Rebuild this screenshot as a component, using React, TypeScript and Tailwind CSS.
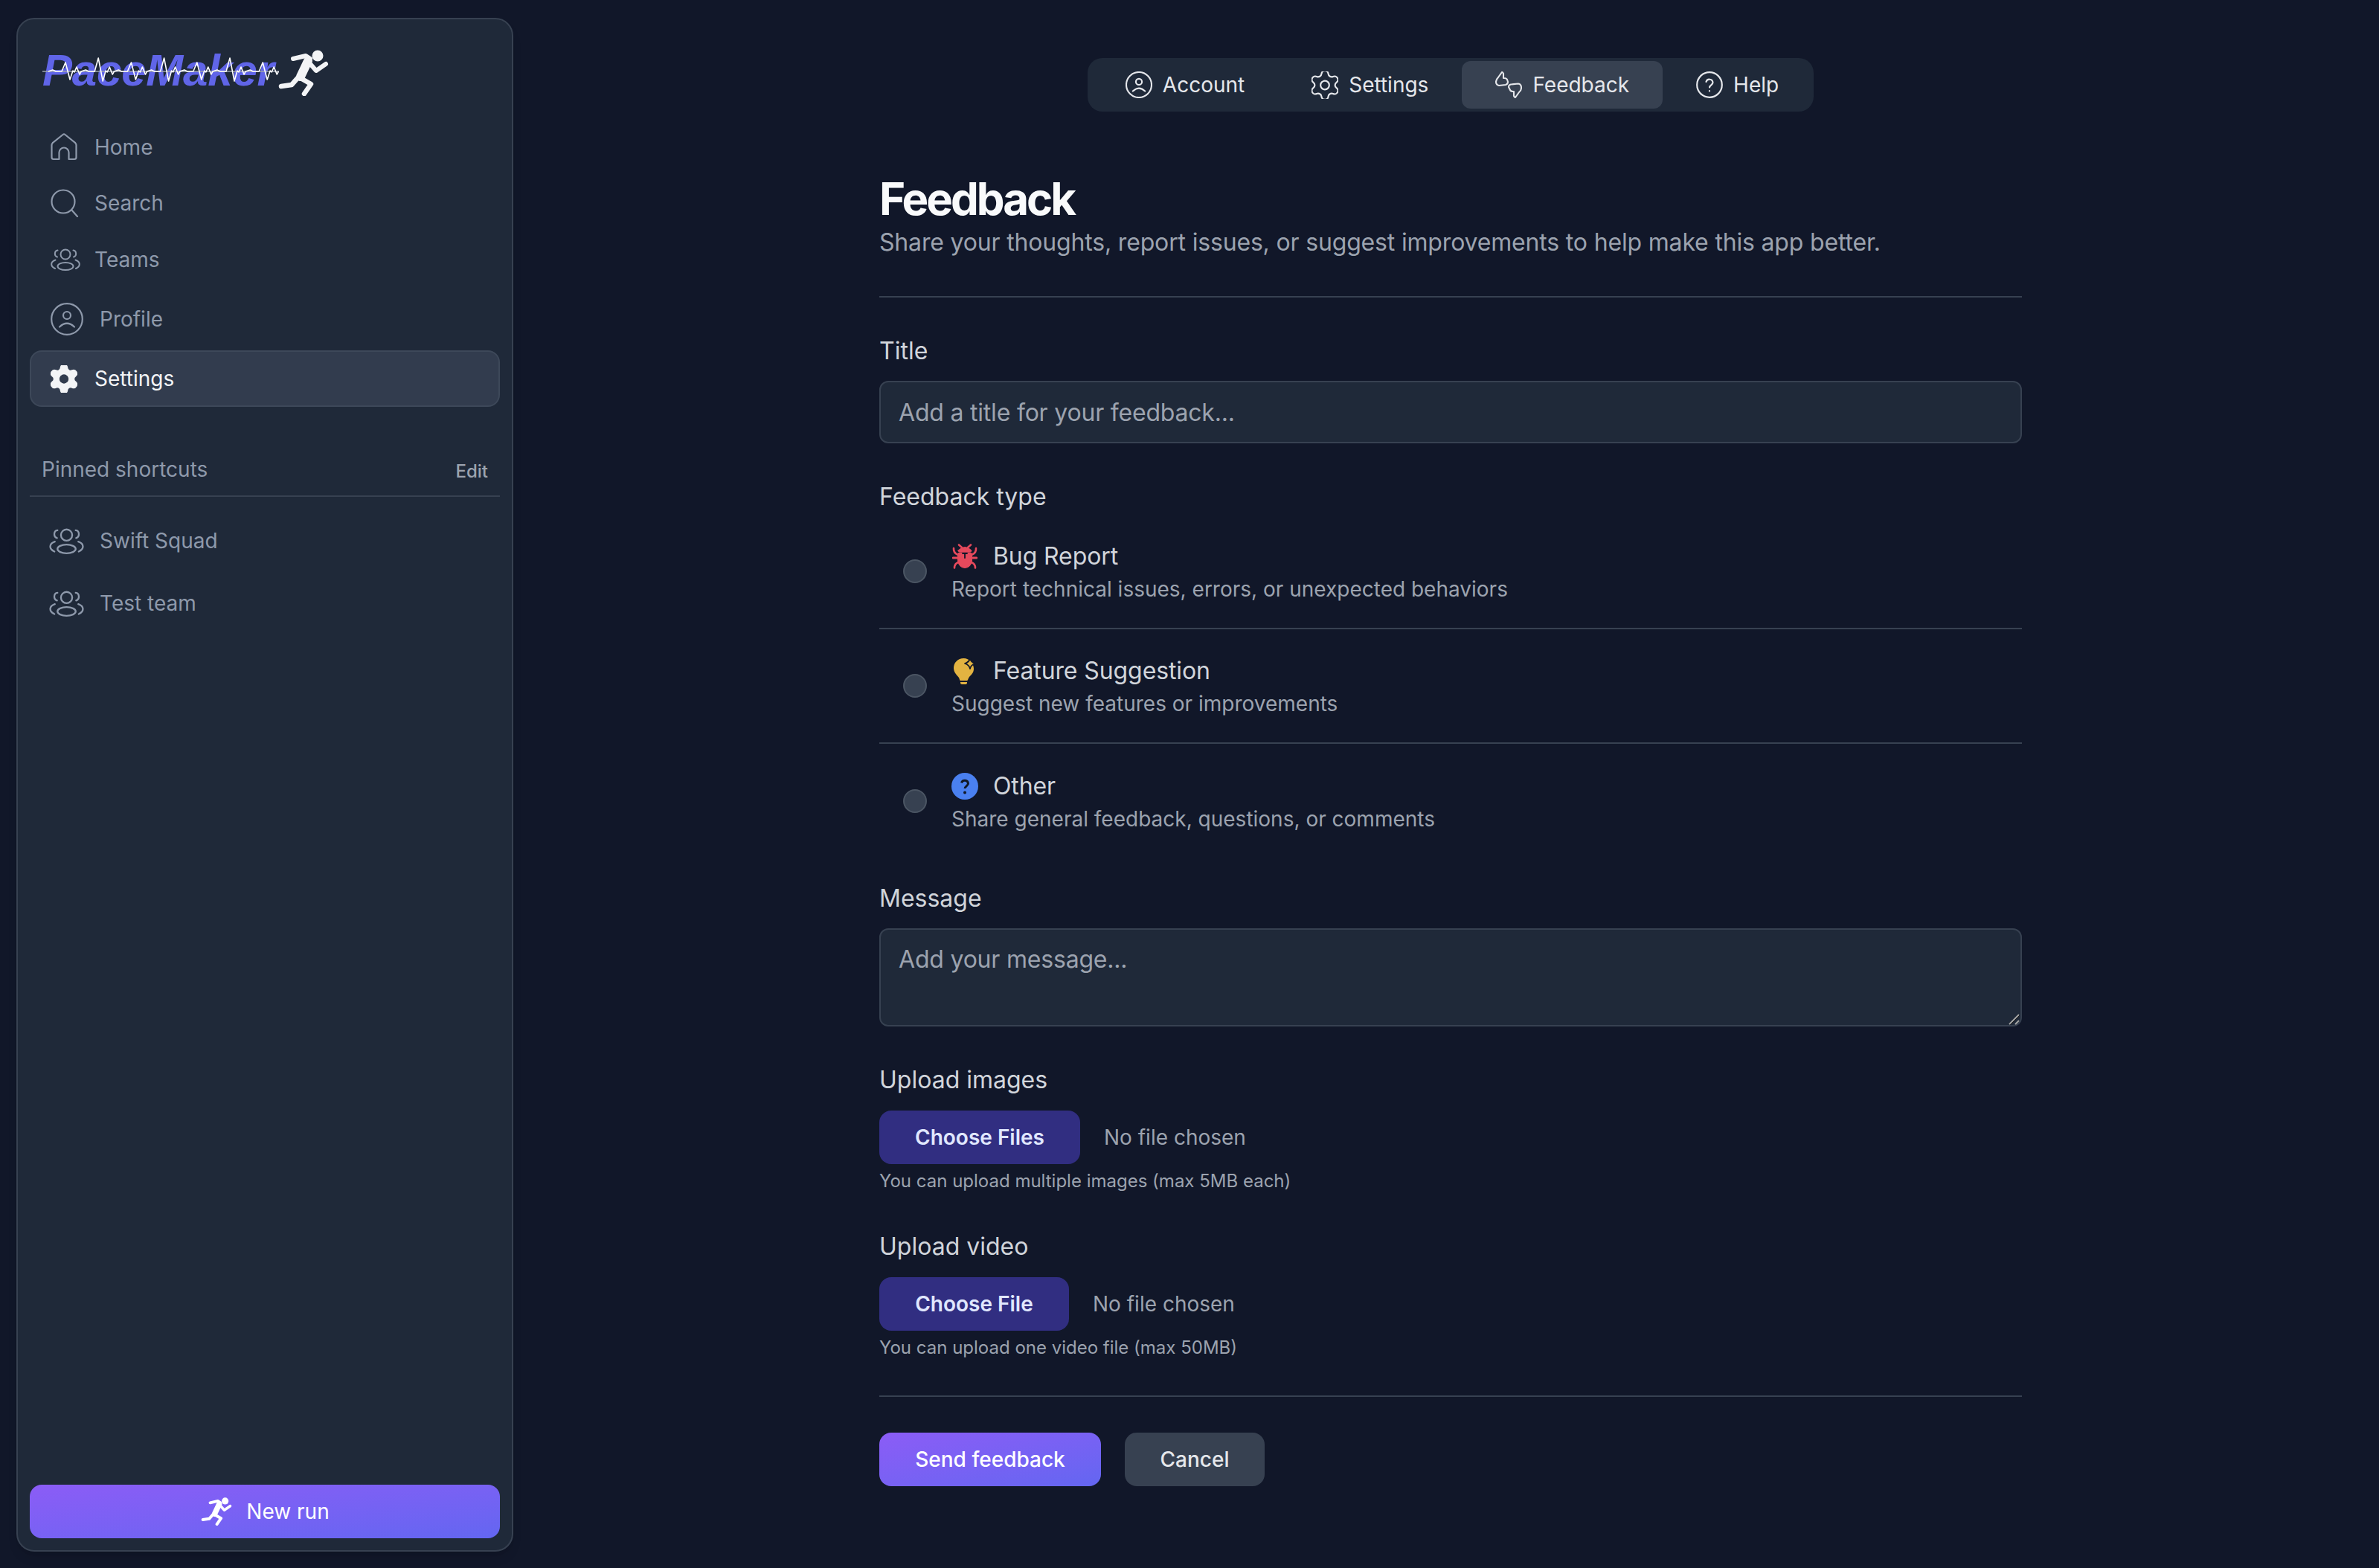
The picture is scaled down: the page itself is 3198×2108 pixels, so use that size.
import React from "react";

const gearPath =
  "M9.671 4.136a2.34 2.34 0 0 1 4.659 0 2.34 2.34 0 0 0 3.319 1.915 2.34 2.34 0 0 1 2.33 4.033 2.34 2.34 0 0 0 0 3.831 2.34 2.34 0 0 1-2.33 4.033 2.34 2.34 0 0 0-3.319 1.915 2.34 2.34 0 0 1-4.659 0 2.34 2.34 0 0 0-3.32-1.915 2.34 2.34 0 0 1-2.33-4.033 2.34 2.34 0 0 0 0-3.831A2.34 2.34 0 0 1 6.35 6.051a2.34 2.34 0 0 0 3.32-1.915";

function Runner({ className }: { className: string }) {
  return (
    <svg viewBox="0 0 70 62" className={className} fill="none" stroke="currentColor" strokeLinecap="round" strokeLinejoin="round">
      <circle cx="54" cy="8" r="7.5" fill="currentColor" stroke="none" />
      <path d="M21 12 L38 8 L44 12" strokeWidth="6" />
      <path d="M41 15 L31 36" strokeWidth="12" />
      <path d="M45 20 L52 28 L65 19" strokeWidth="6" />
      <path d="M27 38 L19 47 L5 49" strokeWidth="6.5" />
      <path d="M31 38 L45 46 L36 59" strokeWidth="6.5" />
    </svg>
  );
}

function Ecg() {
  const pts: string[] = [];
  for (let i = 0; i < 7; i++) {
    const x = 8 + i * 44.2;
    const tall = i % 2 === 1;
    const up = tall ? 2 : 8;
    const down = tall ? 33 : 31;
    pts.push(`${x},20 ${x + 6},18 ${x + 10},20 ${x + 18},20 ${x + 23},${up} ${x + 29},${down} ${x + 33},19 ${x + 35},21 ${x + 38},14 ${x + 42},24 ${x + 44.2},20`);
  }
  return (
    <svg viewBox="0 0 320 40" className="absolute left-0 top-[16px] h-[40px] w-[320px]" fill="none">
      <path d="M0 20H318" stroke="#9ca3af" strokeWidth="1.5" />
      <polyline points={pts.join(" ")} stroke="#ffffff" strokeWidth="1.6" strokeLinejoin="round" />
    </svg>
  );
}

function HomeIcon() {
  return (
    <svg viewBox="0 0 36 37" className="h-[37px] w-[36px]" fill="none" stroke="currentColor" strokeWidth="2.2" strokeLinejoin="round">
      <path d="M4 35h7.5v-9a6.5 6.5 0 0 1 13 0v9H32a2.5 2.5 0 0 0 2.5-2.5V16a4 4 0 0 0-1.2-2.8L19.5 2a2.2 2.2 0 0 0-3 0L2.7 13.2A4 4 0 0 0 1.5 16v16.5A2.5 2.5 0 0 0 4 35z" />
    </svg>
  );
}

function SearchIcon() {
  return (
    <svg viewBox="0 0 38 38" className="h-[38px] w-[38px]" fill="none" stroke="currentColor" strokeWidth="2.2" strokeLinecap="round">
      <circle cx="17" cy="17" r="15.5" />
      <path d="M28.5 28.5 L36 37" />
    </svg>
  );
}

function TeamIcon({ className }: { className: string }) {
  return (
    <svg viewBox="0 0 40 30" className={className} fill="none" stroke="currentColor" strokeWidth="2" strokeLinecap="round">
      <circle cx="20" cy="8" r="6.5" />
      <ellipse cx="20" cy="24" rx="10.5" ry="5" />
      <path d="M9.5 2.5C5 3 4.5 10 9 11.5" />
      <path d="M30.5 2.5C35 3 35.5 10 31 11.5" />
      <path d="M6.5 15.5C-0.5 18 -0.5 24 6 27" />
      <path d="M33.5 15.5C40.5 18 40.5 24 34 27" />
    </svg>
  );
}

function ProfileIcon({ className, sw = 2.2 }: { className: string; sw?: number }) {
  return (
    <svg viewBox="0 0 44 44" className={className} fill="none" stroke="currentColor" strokeWidth={sw} strokeLinecap="round">
      <circle cx="22" cy="22" r="20.8" />
      <circle cx="22" cy="17" r="5" />
      <path d="M12 32.5Q22 23 32 32.5" />
    </svg>
  );
}

function GearOutline() {
  return (
    <svg viewBox="3 2.5 18 19" className="h-[37px] w-[36px]" fill="none" stroke="currentColor" strokeWidth="1.1" strokeLinejoin="round">
      <path d={gearPath} />
      <circle cx="12" cy="12" r="3" />
    </svg>
  );
}

function GearSolid() {
  return (
    <svg viewBox="3.6 2.4 16.8 19.2" className="h-[37px] w-[36px]" fill="#f3f4f6" stroke="#f3f4f6" strokeWidth="0.8" strokeLinejoin="round">
      <path d={gearPath} />
      <circle cx="12" cy="12" r="3.2" fill="#323c4e" stroke="none" />
    </svg>
  );
}

function FeedbackIcon() {
  return (
    <svg viewBox="0 0 36 36" className="h-[36px] w-[36px]" fill="none" stroke="currentColor" strokeWidth="2.1" strokeLinejoin="round">
      <path d="M9 1L4 8Q1 11 1 14Q1 18 5 19L14 18Q17 17 17 14L16 11Q15 9 12 9L11 9L11 3Q10 1 9 1Z" />
      <path d="M27 35L32 28Q35 26 35 22Q35 17 31 16.5L21 17.5Q18 18 18 21L20 25Q21 27 24 27L25 27L25 33Q26 35 27 35Z" />
    </svg>
  );
}

function HelpIcon() {
  return (
    <svg viewBox="0 0 36 36" className="h-[36px] w-[36px]" fill="none" stroke="currentColor" strokeWidth="2.2" strokeLinecap="round">
      <circle cx="18" cy="18" r="16.8" />
      <path d="M13.5 14a4.6 4.6 0 0 1 9 1c0 3-4.4 3.6-4.4 6.4" />
      <path d="M18 26.2v.2" />
    </svg>
  );
}

function BugIcon() {
  return (
    <svg viewBox="0 0 34 34" className="h-[34px] w-[34px]" fill="#e5495c" stroke="#e5495c" strokeLinecap="round" strokeLinejoin="round">
      <path d="M9 1.5L13 5M25 1.5L21 5" strokeWidth="2.6" fill="none" />
      <path d="M8 9Q17 0 26 9Q26 11 24 11H10Q8 11 8 9Z" strokeWidth="1" />
      <path d="M7.5 14Q7.5 12 10 12H24Q26.5 12 26.5 14V23Q25 32 17 32.5Q9 32 7.5 23Z" strokeWidth="1" />
      <path d="M2 6Q1.5 12 7 14.5M32 6Q32.5 12 27 14.5" strokeWidth="2.6" fill="none" />
      <path d="M1.2 19H7M32.8 19H27" strokeWidth="3" fill="none" />
      <path d="M3 32.5Q3 27 8 25M31 32.5Q31 27 26 25" strokeWidth="2.6" fill="none" />
      <path d="M14 13H20M17 13V19" stroke="#111729" strokeWidth="1.8" fill="none" />
    </svg>
  );
}

function BulbIcon() {
  return (
    <svg viewBox="0 0 30 36" className="h-[36px] w-[30px]" fill="#e3b341">
      <path d="M13.5 1C5.5 1 0 7 0 14C0 20 4 23 7 27C8 29 8 31 9 31H18C19 31 19 29 21 26C24 23 27 20 27 15C27 8 21 1 13.5 1Z" />
      <path d="M9 33H18V34Q18 36 16 36H11Q9 36 9 34Z" />
      <path d="M22 1Q23 6 29 8Q23 10 22 15Q21 10 15 8Q21 6 22 1Z" stroke="#111729" strokeWidth="1.8" strokeLinejoin="round" />
    </svg>
  );
}

function QuestionIcon() {
  return (
    <svg viewBox="0 0 36 36" className="h-[36px] w-[36px]">
      <circle cx="18" cy="18" r="18" fill="#4a80f0" />
      <path d="M13.5 13.5a4.6 4.6 0 0 1 9 .8c0 3-4.4 3.6-4.4 6.8" fill="none" stroke="#111827" strokeWidth="3" />
      <circle cx="18" cy="26.5" r="2" fill="#111827" />
    </svg>
  );
}

function NavRow({ h, icon, label, w, active }: { h: string; icon: React.ReactNode; label: string; w: string; active?: boolean }) {
  return (
    <a className={`flex items-center text-[28px] ${h} ${active ? "rounded-[16px] border-2 border-[#3d4859] bg-[#323c4e] pl-[26px] text-[#f3f4f6]" : "pl-[28px] text-[#8e99ab]"}`}>
      <span className={`flex shrink-0 items-center justify-start ${w}`}>{icon}</span>
      <span>{label}</span>
    </a>
  );
}

function Tab({ icon, label, active }: { icon: React.ReactNode; label: string; active?: boolean }) {
  return (
    <a className={`flex h-[64px] items-center gap-[14px] rounded-[12px] px-[45px] text-[28px] text-[#e5e7eb] ${active ? "bg-[#374151]" : ""}`}>
      {icon}
      <span>{label}</span>
    </a>
  );
}

function FeedbackOption({ icon, name, desc, border }: { icon: React.ReactNode; name: string; desc: string; border?: boolean }) {
  return (
    <label className={`flex h-[154px] items-center gap-[33px] px-[32px] ${border ? "border-b-2 border-[#374151]" : ""}`}>
      <span className="h-[32px] w-[32px] shrink-0 rounded-full border-2 border-[#4b5563] bg-[#374151]" />
      <span className="flex flex-col pt-[3px]">
        <span className="flex h-[44px] items-center text-[32px] tracking-[-0.1px] text-[#d1d5db]">
          <span className="mr-[20px] flex w-[36px] items-center justify-center">{icon}</span>
          {name}
        </span>
        <span className="h-[44px] text-[28px] leading-[44px] text-[#9ca3af]">{desc}</span>
      </span>
    </label>
  );
}

function FieldLabel({ children, className }: { children: React.ReactNode; className: string }) {
  return <div className={`text-[32px] leading-[40px] text-[#d1d5db] ${className}`}>{children}</div>;
}

function Upload({ title, button, width, hint }: { title: string; button: string; width: string; hint: string }) {
  return (
    <div>
      <FieldLabel className="mt-[52px]">{title}</FieldLabel>
      <div className="mt-[21px] flex items-center">
        <button className={`h-[72px] ${width} rounded-[16px] bg-[#312e81] text-[28px] font-semibold text-[#e0e7ff]`}>{button}</button>
        <span className="ml-[32px] text-[28px] text-[#9ca3af]">No file chosen</span>
      </div>
      <p className="mt-[7px] text-[24px] leading-[32px] text-[#9ca3af]">{hint}</p>
    </div>
  );
}

export default function App() {
  return (
    <div className="flex h-[2108px] w-full overflow-hidden bg-[#111729]" style={{ fontFamily: "Inter, 'Noto Sans', sans-serif" }}>
      <div className="w-[702px] shrink-0 pb-[22px] pl-[22px] pr-[12px] pt-[24px]">
        <aside className="flex h-full flex-col rounded-[24px] border-2 border-[#374151] bg-[#1f2939] px-[16px] pb-[16px] shadow-lg">
          <div className="relative ml-[17px] mt-[34px] flex h-[70px] items-center">
            <span className="text-[60px] font-bold italic leading-[70px] tracking-[-0.2px] text-[#6065e8]" style={{ fontFamily: "'Liberation Sans', sans-serif" }}>PaceMaker</span>
            <Ecg />
            <Runner className="absolute left-[316px] top-[7px] h-[62px] w-[70px] text-[#f3f4f6]" />
          </div>
          <nav className="mt-[30px] flex flex-col">
            <NavRow h="h-[75px]" icon={<HomeIcon />} label="Home" w="w-[59px]" />
            <NavRow h="h-[76px]" icon={<SearchIcon />} label="Search" w="w-[59px]" />
            <NavRow h="h-[76px]" icon={<TeamIcon className="h-[30px] w-[40px]" />} label="Teams" w="w-[59px]" />
            <NavRow h="h-[84px]" icon={<ProfileIcon className="h-[44px] w-[44px]" />} label="Profile" w="w-[66px]" />
            <NavRow h="h-[76px]" icon={<GearSolid />} label="Settings" w="w-[59px]" active />
          </nav>
          <div className="mt-[61px] flex h-[60px] items-center justify-between border-b-2 border-[#374151] pb-[12px] pl-[16px] pr-[16px]">
            <span className="text-[28px] text-[#8e99ab]">Pinned shortcuts</span>
            <span className="mt-[6px] text-[24px] font-medium text-[#9ca3af]">Edit</span>
          </div>
          <div className="mt-[17px] flex flex-col">
            <a className="flex h-[84px] items-center pl-[26px] text-[28px] text-[#8e99ab]">
              <TeamIcon className="h-[35px] w-[47px]" />
              <span className="ml-[21px]">Swift Squad</span>
            </a>
            <a className="flex h-[84px] items-center pl-[26px] text-[28px] text-[#8e99ab]">
              <TeamIcon className="h-[35px] w-[47px]" />
              <span className="ml-[21px]">Test team</span>
            </a>
          </div>
          <button className="mt-auto flex h-[72px] items-center justify-center gap-[18px] rounded-[16px] bg-gradient-to-br from-[#8b5cf6] to-[#6366f1] text-[28px] text-white">
            <Runner className="h-[38px] w-[44px] text-white" />
            <span>New run</span>
          </button>
        </aside>
      </div>

      <main className="flex min-w-0 flex-1 flex-col items-center">
        <div className="mt-[78px] flex h-[72px] items-center rounded-[20px] bg-[#1f2939] pl-[6px] pr-[2px]">
          <Tab icon={<ProfileIcon className="h-[36px] w-[36px]" sw={2.6} />} label="Account" />
          <Tab icon={<GearOutline />} label="Settings" />
          <Tab icon={<FeedbackIcon />} label="Feedback" active />
          <Tab icon={<HelpIcon />} label="Help" />
        </div>

        <div className="w-[1536px]">
          <div className="mt-[85px] border-b-2 border-[#374151] pb-[45px]">
            <h1 className="text-[60px] font-bold leading-[64px] tracking-[-3px] text-[#f9fafb]">Feedback</h1>
            <p className="text-[32px] leading-[54px] tracking-[-0.17px] text-[#9ca3af]">Share your thoughts, report issues, or suggest improvements to help make this app better.</p>
          </div>

          <FieldLabel className="mt-[52px]">Title</FieldLabel>
          <input
            placeholder="Add a title for your feedback..."
            className="mt-[20px] block h-[84px] w-full rounded-[12px] border-2 border-[#374151] bg-[#1f2939] px-[24px] text-[32px] tracking-[-0.2px] text-[#e5e7eb] placeholder:text-[#9ca3af]"
          />

          <FieldLabel className="mt-[52px]">Feedback type</FieldLabel>
          <div className="mt-[4px]">
            <FeedbackOption icon={<BugIcon />} name="Bug Report" desc="Report technical issues, errors, or unexpected behaviors" border />
            <FeedbackOption icon={<BulbIcon />} name="Feature Suggestion" desc="Suggest new features or improvements" border />
            <FeedbackOption icon={<QuestionIcon />} name="Other" desc="Share general feedback, questions, or comments" />
          </div>

          <FieldLabel className="mt-[34px]">Message</FieldLabel>
          <div className="relative mt-[20px]">
            <textarea
              placeholder="Add your message..."
              className="block h-[132px] w-full resize-none rounded-[12px] border-2 border-[#374151] bg-[#1f2939] px-[24px] py-[20px] text-[32px] leading-[40px] tracking-[-0.2px] text-[#e5e7eb] placeholder:text-[#9ca3af]"
            />
            <svg viewBox="0 0 16 16" className="pointer-events-none absolute bottom-[2px] right-[2px] h-[16px] w-[16px]" fill="none" strokeWidth="2">
              <path d="M1 15L14 2" stroke="#a3a3a3" />
              <path d="M9 15L14 10" stroke="#a3a3a3" />
              <path d="M2.5 15.5L15 3" stroke="#111111" strokeWidth="1" />
            </svg>
          </div>

          <Upload title="Upload images" button="Choose Files" width="w-[270px]" hint="You can upload multiple images (max 5MB each)" />
          <Upload title="Upload video" button="Choose File" width="w-[255px]" hint="You can upload one video file (max 50MB)" />

          <div className="mt-[48px] flex gap-[32px] border-t-2 border-[#374151] pt-[48px]">
            <button className="h-[72px] w-[298px] rounded-[16px] bg-gradient-to-br from-[#8b5cf6] to-[#6366f1] text-[28px] font-medium text-white">Send feedback</button>
            <button className="h-[72px] w-[188px] rounded-[16px] bg-[#374151] text-[28px] font-medium text-[#e5e7eb]">Cancel</button>
          </div>
        </div>
      </main>
    </div>
  );
}
